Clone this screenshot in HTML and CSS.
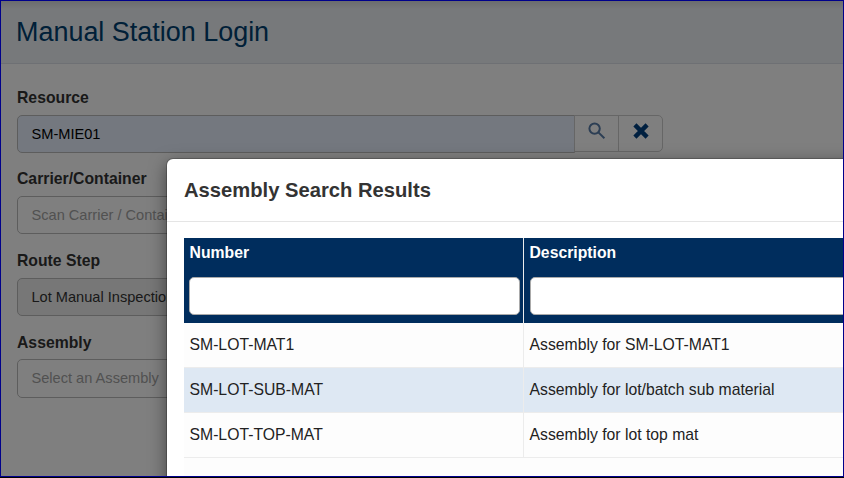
FILE: index.html
```html
<!DOCTYPE html>
<html lang="en">
<head>
<meta charset="utf-8">
<title>Manual Station Login</title>
<link rel="stylesheet" href="styles.css">
</head>
<body>
<div class="frame">
  <main class="page">
    <header class="page-header"><h1>Manual Station Login</h1></header>
    <form class="login-form">
      <div class="field">
        <label>Resource</label>
        <div class="input-group">
          <div class="input resource">SM-MIE01</div>
          <div class="btn search"><svg width="20" height="20" viewBox="0 0 20 20"><circle cx="7.6" cy="7.6" r="5.2"/><path d="M11.4 11.4 17.4 17.2"/></svg></div>
          <div class="btn clear"><svg width="20" height="20" viewBox="0 0 20 20"><path d="M3.9 3.9 16.1 16.1M16.1 3.9 3.9 16.1"/></svg></div>
        </div>
      </div>
      <div class="field tall"><label>Carrier/Container</label><div class="input placeholder">Scan Carrier / Container</div></div>
      <div class="field"><label>Route Step</label><div class="input readonly">Lot Manual Inspection</div></div>
      <div class="field last"><label>Assembly</label><div class="input placeholder">Select an Assembly</div></div>
    </form>
  </main>
  <div class="backdrop"></div>
  <section class="modal">
    <header class="modal-header"><h2>Assembly Search Results</h2></header>
    <div class="modal-body">
      <div class="grid">
        <div class="row head">
          <div class="cell"><span>Number</span><div class="filter"></div></div>
          <div class="cell"><span>Description</span><div class="filter"></div></div>
        </div>
        <div class="row"><div class="cell">SM-LOT-MAT1</div><div class="cell">Assembly for SM-LOT-MAT1</div></div>
        <div class="row selected"><div class="cell">SM-LOT-SUB-MAT</div><div class="cell">Assembly for lot/batch sub material</div></div>
        <div class="row"><div class="cell">SM-LOT-TOP-MAT</div><div class="cell">Assembly for lot top mat</div></div>
        <div class="rest"></div>
      </div>
    </div>
  </section>
</div>
</body>
</html>
```

FILE: styles.css
```css
* { box-sizing: border-box; }
body {
  margin: 0;
  height: 478px;
  overflow: hidden;
  background: #000;
  font-family: "Liberation Sans", Arial, sans-serif;
  font-size: 15.75px;
  color: #222;
}
.frame {
  position: relative;
  height: 477px;
  border: 1px solid #00008b;
  overflow: hidden;
  background: #fff;
}
.page-header {
  height: 63px;
  padding: 15px 15px 0;
  background: linear-gradient(#d8dadd, #eff2f6 8px);
  border-bottom: 1px solid #dce1e8;
}
h1 {
  margin: 0;
  font-size: 26.95px;
  font-weight: 400;
  line-height: 32px;
  color: #004070;
}
.login-form { padding: 21px 16px 0; }
.field { height: 81px; }
.field.tall { height: 82px; }
.field label {
  display: block;
  height: 30px;
  line-height: 26px;
  font-weight: 700;
  color: #333;
}
.field.last label { line-height: 28px; }
.input-group { display: flex; }
.input {
  width: 558px;
  height: 38px;
  padding: 0 13.5px;
  border: 1px solid #bbb;
  border-radius: 5px;
  font-size: 14.6px;
  line-height: 36px;
  color: #333;
}
.input.resource {
  border-radius: 5px 0 0 5px;
  background: #e8f0fe;
  color: #000;
}
.input.placeholder { color: #a3a3a3; }
.input.readonly { background: #eee; }
.field.last .input { height: 39px; }
.btn {
  display: flex;
  justify-content: center;
  width: 45px;
  height: 37px;
  margin-left: -1px;
  padding-top: 5px;
  border: 1px solid #ccc;
}
.btn svg { fill: none; stroke: #597da8; stroke-width: 2; }
.btn.clear { border-radius: 0 5px 5px 0; }
.btn.clear svg { stroke: #004080; stroke-width: 4.4; }
.backdrop {
  position: absolute;
  inset: 0;
  background: rgba(0, 0, 0, .5);
}
.modal {
  position: absolute;
  left: 166px;
  top: 158px;
  width: 900px;
  height: 500px;
  border-radius: 6px 0 0;
  background: #fff;
  box-shadow: 0 0 0 1px rgba(0, 0, 0, .2), 0 5px 17px rgba(0, 0, 0, .5);
}
.modal-header {
  height: 63px;
  padding: 17px 17px 0;
  border-bottom: 1px solid #e5e5e5;
}
h2 {
  margin: 0;
  font-size: 20.2px;
  line-height: 28px;
  color: #333;
}
.modal-body { padding: 16px 0 0 17px; }
.row { display: flex; height: 45px; background: #fdfdfd; }
.cell {
  flex: 1;
  padding: 0 5.5px;
  border-bottom: 1px solid #ececec;
  line-height: 43px;
}
.cell:first-child { flex: 0 0 340px; border-right: 1px solid #ececec; }
.selected { background: #dee8f3; }
.head { height: 85px; background: #002d5d; color: #fff; font-weight: 700; }
.head .cell { border-bottom: 0; padding: 5px 3px 0 6px; line-height: 20px; }
.head .cell:first-child { padding-left: 5px; }
.head span { display: block; }
.head .cell:first-child span { margin-left: .6px; }
.head .cell:last-child span { margin-left: -.5px; }
.filter {
  height: 38px;
  margin-top: 14px;
  border: 1px solid #aaa;
  border-radius: 5px;
  background: #fff;
}
.rest { height: 60px; background: #fdfdfd; }
```
